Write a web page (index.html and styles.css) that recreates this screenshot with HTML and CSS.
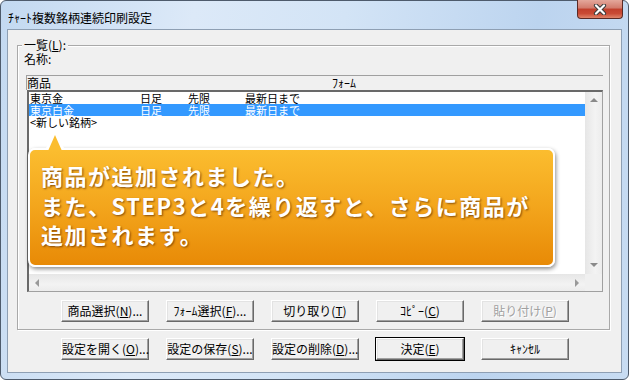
FILE: index.html
```html
<!DOCTYPE html>
<html lang="ja">
<head>
  <meta charset="UTF-8">
  <title>チャート複数銘柄連続印刷設定</title>
  <link rel="stylesheet" href="styles.css">
</head>
<body>
<div class="window">
  <div class="titlebar">
    <span class="title">ﾁｬｰﾄ複数銘柄連続印刷設定</span>
    <span class="close">
      <svg width="14" height="11" viewBox="0 0 14 11">
        <path d="M3 1.5 L11 9.5 M11 1.5 L3 9.5" stroke="#3b3b3b" stroke-width="4.2" stroke-linecap="round"/>
        <path d="M3 1.5 L11 9.5 M11 1.5 L3 9.5" stroke="#fff" stroke-width="2.2" stroke-linecap="round"/>
      </svg>
    </span>
  </div>

  <div class="client">
    <div class="group">
      <span class="legend">一覧(<u>L</u>):</span>
      <div class="name">名称:</div>

      <div class="list-head">
        <span class="col-name">商品</span>
        <span>ﾌｫｰﾑ</span>
      </div>
      <div class="list">
        <div class="rows">
          <div class="row">
            <span class="c1">東京金</span><span class="c2">日足</span><span class="c3">先限</span><span>最新日まで</span>
          </div>
          <div class="row selected">
            <span class="c1">東京白金</span><span class="c2">日足</span><span class="c3">先限</span><span>最新日まで</span>
          </div>
          <div class="row">
            <span>&lt;新しい銘柄&gt;</span>
          </div>
        </div>
        <div class="vscroll">
          <span class="arrow up"></span>
          <span class="arrow down"></span>
        </div>
        <div class="hscroll">
          <span class="arrow left"></span>
          <span class="arrow right"></span>
        </div>
        <div class="corner"></div>
      </div>

      <div class="buttons">
        <button class="btn">商品選択(<u>N</u>)...</button>
        <button class="btn">ﾌｫｰﾑ選択(<u>F</u>)...</button>
        <button class="btn">切り取り(<u>T</u>)</button>
        <button class="btn">ｺﾋﾟｰ(<u>C</u>)</button>
        <button class="btn disabled">貼り付け(<u>P</u>)</button>
      </div>
    </div>

    <div class="buttons bottom">
      <button class="btn">設定を開く(<u>O</u>)...</button>
      <button class="btn">設定の保存(<u>S</u>)...</button>
      <button class="btn">設定の削除(<u>D</u>)...</button>
      <button class="btn default">決定(<u>E</u>)</button>
      <button class="btn">ｷｬﾝｾﾙ</button>
    </div>
  </div>

  <div class="callout">
    商品が追加されました。<br>
    また、STEP3と4を繰り返すと、さらに商品が<br>
    追加されます。
  </div>
</div>
</body>
</html>
```

FILE: styles.css
```css
body {
  margin: 0;
  background: #fff;
  font-family: "Noto Sans CJK JP", sans-serif;
  font-size: 12px;
  color: #000;
}
.window {
  position: relative;
  width: 629px;
  height: 380px;
  box-sizing: border-box;
  border: 1px solid #4e5b6c;
  border-radius: 6px;
  padding: 0 6px 6px;
  background: linear-gradient(100deg, #c3d9f1 0%, #dce9f8 28%, #d3e4f6 50%, #bcd4ef 78%, #c8dcf2 100%);
}
.titlebar {
  height: 28px;
  display: flex;
  justify-content: space-between;
  align-items: flex-start;
}
.title {
  padding: 10px 0 0 1px;
  line-height: 14px;
  font-size: 12px;
}
.close {
  width: 46px;
  height: 19px;
  margin-top: -1px;
  margin-right: -1px;
  box-sizing: border-box;
  border: 1px solid #5b2a25;
  border-top: none;
  border-radius: 0 0 4px 4px;
  background: linear-gradient(#e4a79b 0%, #d27a6b 45%, #c13f2c 50%, #c94a34 75%, #e0846a 100%);
  display: flex;
  align-items: center;
  justify-content: center;
}
.client {
  height: 344px;
  box-sizing: border-box;
  border: 1px solid #8e9fb3;
  background: #f0f0f0;
}
.group {
  position: relative;
  margin: 15px 0 0 9px;
  width: 593px;
  box-sizing: border-box;
  border: 1px solid #a9a9a9;
  box-shadow: inset 1px 1px 0 #fff, 1px 1px 0 #fff;
  padding: 6px 0 7px;
}
.legend {
  position: absolute;
  top: -8px;
  left: 4px;
  padding: 0 2px;
  line-height: 14px;
  background: #f0f0f0;
}
.name {
  margin-left: 6px;
  line-height: 14px;
}
.list-head {
  margin: 9px 0 0 8px;
  width: 577px;
  height: 15px;
  box-sizing: border-box;
  border-top: 1px solid #a0a0a0;
  border-left: 1px solid #a0a0a0;
  line-height: 14px;
  display: flex;
}
.col-name {
  width: 305px;
}
.list {
  margin-left: 9px;
  width: 576px;
  height: 202px;
  box-sizing: border-box;
  border-style: solid;
  border-width: 2px 1px 1px 2px;
  border-color: #696969 #a0a0a0 #a0a0a0 #696969;
  background: #fff;
  display: grid;
  grid-template-columns: 1fr 17px;
  grid-template-rows: 1fr 17px;
}
.rows {
  overflow: hidden;
}
.row {
  height: 12px;
  line-height: 12px;
  font-size: 11px;
  padding-left: 1px;
  display: flex;
  white-space: nowrap;
}
.row.selected {
  background: #3399ff;
  color: #fff;
}
.c1 {
  width: 110px;
}
.c2 {
  width: 48px;
}
.c3 {
  width: 57px;
}
.vscroll {
  background: linear-gradient(90deg, #e6e6e6, #f3f3f3 60%, #ececec);
  display: flex;
  flex-direction: column;
  justify-content: space-between;
  align-items: center;
  padding: 6px 0 7px;
}
.hscroll {
  background: linear-gradient(#e6e6e6, #f3f3f3 60%, #ececec);
  display: flex;
  justify-content: space-between;
  align-items: center;
  padding: 0 6px;
}
.corner {
  background: #f0f0f0;
}
.arrow {
  width: 0;
  height: 0;
  border: 4px solid transparent;
}
.arrow.up {
  border-top: none;
  border-bottom-color: #8a8a8a;
}
.arrow.down {
  border-bottom: none;
  border-top-color: #8a8a8a;
}
.arrow.left {
  border-left: none;
  border-right-color: #9a9a9a;
}
.arrow.right {
  border-right: none;
  border-left-color: #9a9a9a;
}
.buttons {
  display: flex;
  gap: 17px;
  margin: 8px 0 0 43px;
}
.buttons.bottom {
  margin: 8px 0 0 53px;
}
.btn {
  width: 88px;
  height: 22px;
  padding: 0;
  box-sizing: border-box;
  font-family: "Noto Sans CJK JP", sans-serif;
  font-size: 12px;
  line-height: 14px;
  color: #000;
  background: #f0f0f0;
  border: 1px solid;
  border-color: #fff #696969 #696969 #fff;
  box-shadow: inset -1px -1px 0 #a0a0a0, inset 1px 1px 0 #e3e3e3;
  white-space: nowrap;
}
.btn.disabled {
  color: #a0a0a0;
  text-shadow: 1px 1px 0 #fff;
}
.btn.default {
  outline: 1px solid #000;
}
.callout {
  position: absolute;
  left: 27px;
  top: 147px;
  width: 527px;
  box-sizing: border-box;
  padding: 11px 10px 15px 11px;
  border: 2px solid #fff;
  border-radius: 7px;
  background: linear-gradient(#fbbd2f, #f3a51c 50%, #e88a06);
  box-shadow: 1px 2px 4px rgba(0, 0, 0, 0.45);
  color: #fff;
  font-size: 22px;
  font-weight: bold;
  letter-spacing: 1.5px;
  line-height: 29.5px;
  text-shadow: 1px 1px 2px rgba(90, 40, 0, 0.7);
  white-space: nowrap;
}
.callout::before,
.callout::after {
  content: "";
  position: absolute;
  width: 0;
  height: 0;
  border-style: solid;
  border-color: transparent;
}
.callout::before {
  left: 15px;
  top: -19px;
  border-width: 0 10px 19px;
  border-bottom-color: #fff;
}
.callout::after {
  left: 18px;
  top: -15px;
  border-width: 0 7px 16px;
  border-bottom-color: #fbbd2f;
}
```
